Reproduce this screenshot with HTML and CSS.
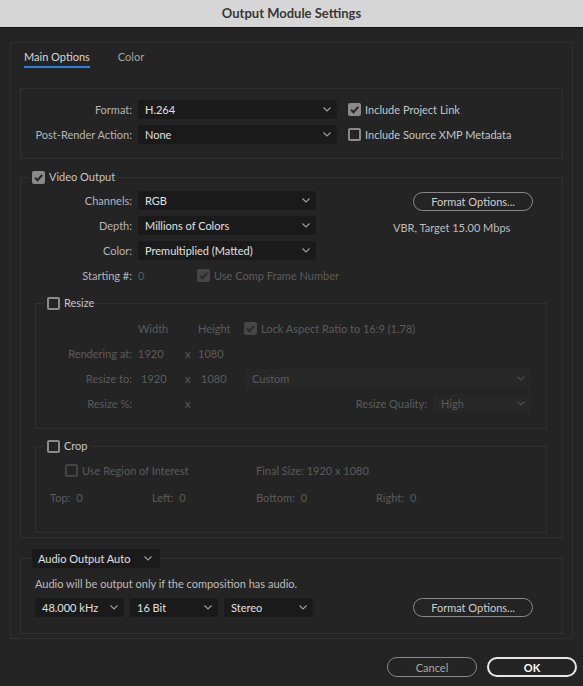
FILE: index.html
```html
<!DOCTYPE html>
<html lang="en">
<head>
  <meta charset="UTF-8" />
  <title>Output Module Settings</title>
  <link rel="stylesheet" href="styles.css">
</head>
<body>
  <div class="titlebar">Output Module Settings</div>

  <div class="panel">
    <div class="tabs">
      <div class="tab active">Main Options</div>
      <div class="tab">Color</div>
    </div>

    <div class="box format-box">
      <div class="row">
        <span class="lbl">Format:</span>
        <div class="select sel-format"><span>H.264</span><svg class="chev" viewBox="0 0 8 5"><path d="M.5.5 4 4 7.5.5"/></svg></div>
        <div class="check-item">
          <span class="ck on"><svg viewBox="0 0 13 13"><path d="M3 6.6l2.5 2.6L10.2 3.8"/></svg></span>
          Include Project Link
        </div>
      </div>
      <div class="row">
        <span class="lbl">Post-Render Action:</span>
        <div class="select sel-format"><span>None</span><svg class="chev" viewBox="0 0 8 5"><path d="M.5.5 4 4 7.5.5"/></svg></div>
        <div class="check-item">
          <span class="ck"></span>
          Include Source XMP Metadata
        </div>
      </div>
    </div>

    <fieldset class="group video">
      <legend>
        <span class="ck on"><svg viewBox="0 0 13 13"><path d="M3 6.6l2.5 2.6L10.2 3.8"/></svg></span>
        Video Output
      </legend>

      <div class="video-body">
        <div class="video-left">
          <div class="row">
            <span class="lbl">Channels:</span>
            <div class="select sel-video"><span>RGB</span><svg class="chev" viewBox="0 0 8 5"><path d="M.5.5 4 4 7.5.5"/></svg></div>
          </div>
          <div class="row">
            <span class="lbl">Depth:</span>
            <div class="select sel-video"><span>Millions of Colors</span><svg class="chev" viewBox="0 0 8 5"><path d="M.5.5 4 4 7.5.5"/></svg></div>
          </div>
          <div class="row">
            <span class="lbl">Color:</span>
            <div class="select sel-video"><span>Premultiplied (Matted)</span><svg class="chev" viewBox="0 0 8 5"><path d="M.5.5 4 4 7.5.5"/></svg></div>
          </div>
          <div class="row">
            <span class="lbl">Starting #:</span>
            <span class="start-val dim">0</span>
            <div class="check-item dim">
              <span class="ck on off"><svg viewBox="0 0 13 13"><path d="M3 6.6l2.5 2.6L10.2 3.8"/></svg></span>
              Use Comp Frame Number
            </div>
          </div>
        </div>
        <div class="video-right">
          <button class="pill fmt-btn">Format Options...</button>
          <div class="bitrate">VBR, Target 15.00 Mbps</div>
        </div>
      </div>

      <fieldset class="group sub resize">
        <legend><span class="ck"></span>Resize</legend>
        <div class="resize-grid dim">
          <span></span>
          <span>Width</span>
          <span></span>
          <span>Height</span>
          <div class="check-item">
            <span class="ck on off"><svg viewBox="0 0 13 13"><path d="M3 6.6l2.5 2.6L10.2 3.8"/></svg></span>
            Lock Aspect Ratio to 16:9 (1.78)
          </div>

          <span class="lbl">Rendering at:</span>
          <span>1920</span>
          <span>x</span>
          <span>1080</span>
          <span></span>

          <span class="lbl">Resize to:</span>
          <span class="num">1920</span>
          <span>x</span>
          <span class="num">1080</span>
          <div class="select off sel-custom"><span>Custom</span><svg class="chev" viewBox="0 0 8 5"><path d="M.5.5 4 4 7.5.5"/></svg></div>

          <span class="lbl">Resize %:</span>
          <span></span>
          <span>x</span>
          <span></span>
          <div class="quality">
            <span>Resize Quality:</span>
            <div class="select off sel-quality"><span>High</span><svg class="chev" viewBox="0 0 8 5"><path d="M.5.5 4 4 7.5.5"/></svg></div>
          </div>
        </div>
      </fieldset>

      <fieldset class="group sub crop">
        <legend><span class="ck"></span>Crop</legend>
        <div class="crop-grid dim">
          <div class="check-item roi">
            <span class="ck off"></span>
            Use Region of Interest
          </div>
          <span>Final Size: 1920 x 1080</span>
          <span></span>

          <span>Top:<b>0</b></span>
          <span>Left:<b>0</b></span>
          <span>Bottom:<b>0</b></span>
          <span>Right:<b>0</b></span>
        </div>
      </fieldset>
    </fieldset>

    <fieldset class="group audio">
      <legend>
        <div class="select sel-audio-mode"><span>Audio Output Auto</span><svg class="chev" viewBox="0 0 8 5"><path d="M.5.5 4 4 7.5.5"/></svg></div>
      </legend>
      <p class="note">Audio will be output only if the composition has audio.</p>
      <div class="audio-row">
        <div class="select sel-rate"><span>48.000 kHz</span><svg class="chev" viewBox="0 0 8 5"><path d="M.5.5 4 4 7.5.5"/></svg></div>
        <div class="select sel-bits"><span>16 Bit</span><svg class="chev" viewBox="0 0 8 5"><path d="M.5.5 4 4 7.5.5"/></svg></div>
        <div class="select sel-rate"><span>Stereo</span><svg class="chev" viewBox="0 0 8 5"><path d="M.5.5 4 4 7.5.5"/></svg></div>
        <button class="pill fmt-btn audio-btn">Format Options...</button>
      </div>
    </fieldset>
  </div>

  <div class="actions">
    <button class="pill cancel">Cancel</button>
    <button class="pill ok">OK</button>
  </div>
</body>
</html>
```

FILE: styles.css
```css
body {
  margin: 0;
  width: 583px;
  height: 686px;
  overflow: hidden;
  background: #242424;
  color: #c4c4c4;
  font-family: Lato, "Noto Sans", sans-serif;
  font-size: 11px;
  line-height: 16px;
}

.titlebar {
  height: 27px;
  line-height: 27px;
  background: #d6d6d6;
  border-bottom: 1px solid #111;
  color: #383838;
  font-size: 13px;
  font-weight: 700;
  text-align: center;
}

.panel {
  margin: 14px 10px 0;
  padding: 0 9px;
  border: 1px solid #2f2f2f;
}

/* tabs */
.tabs {
  display: flex;
  gap: 28px;
  margin-left: 4px;
  padding-top: 6px;
}

.tab {
  color: #a3a3a3;
  padding-bottom: 1px;
  border-bottom: 2px solid transparent;
}

.tab.active {
  color: #d6d6d6;
  border-bottom-color: #2f80dc;
}

/* common bits */
.box {
  border: 1px solid #303030;
}

.row {
  display: flex;
  align-items: center;
  height: 19px;
}

.row > * {
  flex-shrink: 0;
}

.row + .row {
  margin-top: 6px;
}

.lbl {
  width: 111px;
  margin-right: 6px;
  text-align: right;
  color: #b5b5b5;
  white-space: nowrap;
}

.dim,
.dim .lbl {
  color: #5b5b5b;
}

.select {
  box-sizing: border-box;
  display: flex;
  align-items: center;
  justify-content: space-between;
  height: 19px;
  padding: 0 6px 0 7px;
  background: #1a1a1a;
  border-radius: 2px;
  color: #e0e0e0;
  white-space: nowrap;
}

.chev {
  width: 8px;
  height: 5px;
  fill: none;
  stroke: #a0a0a0;
  stroke-width: 1.1;
}

.select.off {
  background: #272727;
  color: #5b5b5b;
}

.select.off .chev {
  stroke: #4e4e4e;
}

.check-item {
  display: flex;
  align-items: center;
  gap: 4px;
  white-space: nowrap;
}

.ck {
  box-sizing: border-box;
  width: 13px;
  height: 13px;
  border: 2px solid #8a8a8a;
  border-radius: 2px;
  flex-shrink: 0;
}

.ck.on {
  border: none;
  background: #8a8a8a;
}

.ck svg {
  display: block;
  width: 13px;
  height: 13px;
  fill: none;
  stroke: #262626;
  stroke-width: 2;
}

.ck.off {
  border-color: #444;
}

.ck.on.off {
  background: #464646;
}

.ck.on.off svg {
  stroke: #2a2a2a;
}

/* format section */
.format-box {
  margin-top: 20px;
  padding: 11px 0 14px;
}

.sel-format {
  width: 199px;
  margin-right: 11px;
}

/* grouped boxes */
.group {
  margin: 0;
  padding: 0;
  min-width: 0;
  border: 1px solid #303030;
}

.group legend {
  display: flex;
  align-items: center;
  gap: 4px;
  margin-left: 8px;
  padding: 0 3px;
  height: 16px;
}

.video {
  margin-top: 10px;
}

.video-body {
  display: flex;
  padding-top: 6px;
}

.video-left {
  width: 295px;
  flex-shrink: 0;
}

.sel-video {
  width: 178px;
}

.start-val {
  width: 59px;
}

.video-right {
  margin-left: 77px;
}

.pill {
  box-sizing: border-box;
  height: 19px;
  padding: 0;
  background: transparent;
  border: 1.5px solid #888;
  border-radius: 10px;
  color: #cdcdcd;
  font-family: inherit;
  font-size: 11px;
}

.fmt-btn {
  display: block;
  width: 120px;
  margin-left: 20px;
  margin-top: 1px;
}

.bitrate {
  margin-top: 9px;
  color: #bdbdbd;
}

/* resize & crop */
.sub {
  margin: 10px 15px 0 14px;
}

.resize-grid {
  display: grid;
  grid-template-columns: 102px 47px 13px 46px 1fr;
  grid-auto-rows: 19px;
  row-gap: 6px;
  align-items: center;
  padding: 8px 0 15px;
  white-space: nowrap;
}

.resize-grid .lbl {
  width: auto;
  margin-right: 6px;
}

.resize-grid .num {
  padding-left: 3px;
}

.sel-custom {
  width: 286px;
  margin-left: 1px;
}

.quality {
  display: flex;
  align-items: center;
  justify-content: flex-end;
  gap: 7px;
  width: 287px;
}

.sel-quality {
  width: 97px;
}

.crop {
  margin-top: 9px;
  margin-bottom: 4px;
}

.crop-grid {
  display: grid;
  grid-template-columns: 102px 104px 120px 1fr;
  grid-auto-rows: 19px;
  row-gap: 8px;
  align-items: center;
  padding: 7px 0 25px 14px;
  white-space: nowrap;
}

.crop-grid .roi {
  grid-column: span 2;
  padding-left: 15px;
}

.crop-grid b {
  font-weight: 400;
  margin-left: 6px;
}

/* audio */
.audio {
  margin: 11px 0 4px;
}

.audio legend {
  margin-left: 11px;
  padding: 0;
  height: 19px;
}

.sel-audio-mode {
  width: 128px;
  padding-left: 6px;
}

.sel-audio-mode .chev {
  margin-right: 2px;
}

.note {
  margin: 8px 0 0 14px;
  color: #bdbdbd;
}

.audio-row {
  display: flex;
  gap: 6px;
  margin-top: 6px;
  padding: 0 29px 16px 14px;
}

.sel-rate {
  width: 89px;
}

.sel-bits {
  width: 88px;
}

.audio-btn {
  margin-left: auto;
  margin-top: 0;
}

/* dialog buttons */
.actions {
  display: flex;
  justify-content: flex-end;
  gap: 10px;
  margin-top: 18px;
  padding-right: 6px;
}

.actions .pill {
  width: 90px;
  height: 20px;
}

.cancel {
  color: #a9a9a9;
}

.ok {
  border: 2px solid #e8e8e8;
  color: #fff;
  font-weight: 700;
}
```
